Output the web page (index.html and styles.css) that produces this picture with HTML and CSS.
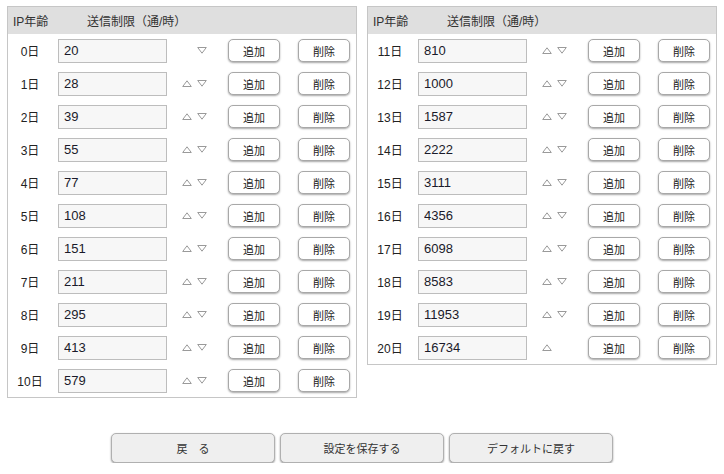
FILE: index.html
```html
<!DOCTYPE html>
<html lang="ja">
<head>
<meta charset="utf-8">
<link rel="stylesheet" href="styles.css">
</head>
<body>
<div class="panels">
  <div class="panel">
    <div class="head"><span class="h-age">IP年齢</span><span class="h-limit">送信制限（通/時）</span></div>
    <div class="row"><span class="day">0日</span><input class="val" value="20"><span class="arrows"><svg class="tri hide" viewBox="0 0 10 7"><path d="M5 0.8L9.3 6.5H0.7Z"/></svg><svg class="tri" viewBox="0 0 10 7"><path d="M0.7 0.5H9.3L5 6.2Z"/></svg></span><button class="btn add">追加</button><button class="btn del">削除</button></div>
    <div class="row"><span class="day">1日</span><input class="val" value="28"><span class="arrows"><svg class="tri" viewBox="0 0 10 7"><path d="M5 0.8L9.3 6.5H0.7Z"/></svg><svg class="tri" viewBox="0 0 10 7"><path d="M0.7 0.5H9.3L5 6.2Z"/></svg></span><button class="btn add">追加</button><button class="btn del">削除</button></div>
    <div class="row"><span class="day">2日</span><input class="val" value="39"><span class="arrows"><svg class="tri" viewBox="0 0 10 7"><path d="M5 0.8L9.3 6.5H0.7Z"/></svg><svg class="tri" viewBox="0 0 10 7"><path d="M0.7 0.5H9.3L5 6.2Z"/></svg></span><button class="btn add">追加</button><button class="btn del">削除</button></div>
    <div class="row"><span class="day">3日</span><input class="val" value="55"><span class="arrows"><svg class="tri" viewBox="0 0 10 7"><path d="M5 0.8L9.3 6.5H0.7Z"/></svg><svg class="tri" viewBox="0 0 10 7"><path d="M0.7 0.5H9.3L5 6.2Z"/></svg></span><button class="btn add">追加</button><button class="btn del">削除</button></div>
    <div class="row"><span class="day">4日</span><input class="val" value="77"><span class="arrows"><svg class="tri" viewBox="0 0 10 7"><path d="M5 0.8L9.3 6.5H0.7Z"/></svg><svg class="tri" viewBox="0 0 10 7"><path d="M0.7 0.5H9.3L5 6.2Z"/></svg></span><button class="btn add">追加</button><button class="btn del">削除</button></div>
    <div class="row"><span class="day">5日</span><input class="val" value="108"><span class="arrows"><svg class="tri" viewBox="0 0 10 7"><path d="M5 0.8L9.3 6.5H0.7Z"/></svg><svg class="tri" viewBox="0 0 10 7"><path d="M0.7 0.5H9.3L5 6.2Z"/></svg></span><button class="btn add">追加</button><button class="btn del">削除</button></div>
    <div class="row"><span class="day">6日</span><input class="val" value="151"><span class="arrows"><svg class="tri" viewBox="0 0 10 7"><path d="M5 0.8L9.3 6.5H0.7Z"/></svg><svg class="tri" viewBox="0 0 10 7"><path d="M0.7 0.5H9.3L5 6.2Z"/></svg></span><button class="btn add">追加</button><button class="btn del">削除</button></div>
    <div class="row"><span class="day">7日</span><input class="val" value="211"><span class="arrows"><svg class="tri" viewBox="0 0 10 7"><path d="M5 0.8L9.3 6.5H0.7Z"/></svg><svg class="tri" viewBox="0 0 10 7"><path d="M0.7 0.5H9.3L5 6.2Z"/></svg></span><button class="btn add">追加</button><button class="btn del">削除</button></div>
    <div class="row"><span class="day">8日</span><input class="val" value="295"><span class="arrows"><svg class="tri" viewBox="0 0 10 7"><path d="M5 0.8L9.3 6.5H0.7Z"/></svg><svg class="tri" viewBox="0 0 10 7"><path d="M0.7 0.5H9.3L5 6.2Z"/></svg></span><button class="btn add">追加</button><button class="btn del">削除</button></div>
    <div class="row"><span class="day">9日</span><input class="val" value="413"><span class="arrows"><svg class="tri" viewBox="0 0 10 7"><path d="M5 0.8L9.3 6.5H0.7Z"/></svg><svg class="tri" viewBox="0 0 10 7"><path d="M0.7 0.5H9.3L5 6.2Z"/></svg></span><button class="btn add">追加</button><button class="btn del">削除</button></div>
    <div class="row"><span class="day">10日</span><input class="val" value="579"><span class="arrows"><svg class="tri" viewBox="0 0 10 7"><path d="M5 0.8L9.3 6.5H0.7Z"/></svg><svg class="tri" viewBox="0 0 10 7"><path d="M0.7 0.5H9.3L5 6.2Z"/></svg></span><button class="btn add">追加</button><button class="btn del">削除</button></div>
  </div>
  <div class="panel">
    <div class="head"><span class="h-age">IP年齢</span><span class="h-limit">送信制限（通/時）</span></div>
    <div class="row"><span class="day">11日</span><input class="val" value="810"><span class="arrows"><svg class="tri" viewBox="0 0 10 7"><path d="M5 0.8L9.3 6.5H0.7Z"/></svg><svg class="tri" viewBox="0 0 10 7"><path d="M0.7 0.5H9.3L5 6.2Z"/></svg></span><button class="btn add">追加</button><button class="btn del">削除</button></div>
    <div class="row"><span class="day">12日</span><input class="val" value="1000"><span class="arrows"><svg class="tri" viewBox="0 0 10 7"><path d="M5 0.8L9.3 6.5H0.7Z"/></svg><svg class="tri" viewBox="0 0 10 7"><path d="M0.7 0.5H9.3L5 6.2Z"/></svg></span><button class="btn add">追加</button><button class="btn del">削除</button></div>
    <div class="row"><span class="day">13日</span><input class="val" value="1587"><span class="arrows"><svg class="tri" viewBox="0 0 10 7"><path d="M5 0.8L9.3 6.5H0.7Z"/></svg><svg class="tri" viewBox="0 0 10 7"><path d="M0.7 0.5H9.3L5 6.2Z"/></svg></span><button class="btn add">追加</button><button class="btn del">削除</button></div>
    <div class="row"><span class="day">14日</span><input class="val" value="2222"><span class="arrows"><svg class="tri" viewBox="0 0 10 7"><path d="M5 0.8L9.3 6.5H0.7Z"/></svg><svg class="tri" viewBox="0 0 10 7"><path d="M0.7 0.5H9.3L5 6.2Z"/></svg></span><button class="btn add">追加</button><button class="btn del">削除</button></div>
    <div class="row"><span class="day">15日</span><input class="val" value="3111"><span class="arrows"><svg class="tri" viewBox="0 0 10 7"><path d="M5 0.8L9.3 6.5H0.7Z"/></svg><svg class="tri" viewBox="0 0 10 7"><path d="M0.7 0.5H9.3L5 6.2Z"/></svg></span><button class="btn add">追加</button><button class="btn del">削除</button></div>
    <div class="row"><span class="day">16日</span><input class="val" value="4356"><span class="arrows"><svg class="tri" viewBox="0 0 10 7"><path d="M5 0.8L9.3 6.5H0.7Z"/></svg><svg class="tri" viewBox="0 0 10 7"><path d="M0.7 0.5H9.3L5 6.2Z"/></svg></span><button class="btn add">追加</button><button class="btn del">削除</button></div>
    <div class="row"><span class="day">17日</span><input class="val" value="6098"><span class="arrows"><svg class="tri" viewBox="0 0 10 7"><path d="M5 0.8L9.3 6.5H0.7Z"/></svg><svg class="tri" viewBox="0 0 10 7"><path d="M0.7 0.5H9.3L5 6.2Z"/></svg></span><button class="btn add">追加</button><button class="btn del">削除</button></div>
    <div class="row"><span class="day">18日</span><input class="val" value="8583"><span class="arrows"><svg class="tri" viewBox="0 0 10 7"><path d="M5 0.8L9.3 6.5H0.7Z"/></svg><svg class="tri" viewBox="0 0 10 7"><path d="M0.7 0.5H9.3L5 6.2Z"/></svg></span><button class="btn add">追加</button><button class="btn del">削除</button></div>
    <div class="row"><span class="day">19日</span><input class="val" value="11953"><span class="arrows"><svg class="tri" viewBox="0 0 10 7"><path d="M5 0.8L9.3 6.5H0.7Z"/></svg><svg class="tri" viewBox="0 0 10 7"><path d="M0.7 0.5H9.3L5 6.2Z"/></svg></span><button class="btn add">追加</button><button class="btn del">削除</button></div>
    <div class="row"><span class="day">20日</span><input class="val" value="16734"><span class="arrows"><svg class="tri" viewBox="0 0 10 7"><path d="M5 0.8L9.3 6.5H0.7Z"/></svg><svg class="tri hide" viewBox="0 0 10 7"><path d="M0.7 0.5H9.3L5 6.2Z"/></svg></span><button class="btn add">追加</button><button class="btn del">削除</button></div>
  </div>
</div>
<div class="actions">
  <button class="big">戻　る</button>
  <button class="big">設定を保存する</button>
  <button class="big">デフォルトに戻す</button>
</div>
</body>
</html>
```

FILE: styles.css
```css
html, body {
  margin: 0;
  padding: 0;
  background: #fff;
}
body {
  font-family: "Liberation Sans", "Noto Sans CJK JP", sans-serif;
  font-size: 12px;
  color: #333;
  padding: 6px 0 0 7px;
}
.panels {
  display: flex;
  align-items: flex-start;
  gap: 10px;
}
.panel {
  width: 348px;
  border: 1px solid #c6c6c6;
  background: #fff;
}
.head {
  height: 27px;
  background: #dfdfdf;
  display: flex;
  align-items: center;
  font-size: 12px;
  color: #333;
}
.h-age {
  margin-left: 5px;
  width: 74px;
}
.row {
  height: 33px;
  display: flex;
  align-items: center;
}
.day {
  width: 44px;
  text-align: center;
  font-size: 12px;
  color: #222;
}
.val {
  margin: 0 0 0 6px;
  box-sizing: border-box;
  width: 109px;
  height: 24px;
  border: 1px solid #bdbdbd;
  background: #f7f7f7;
  padding: 0 0 0 5px;
  font-family: "Liberation Sans", "Noto Sans CJK JP", sans-serif;
  font-size: 13px;
  color: #1a1a2a;
  outline: none;
}
.arrows {
  margin-left: 15px;
  display: flex;
  gap: 5px;
  align-items: center;
}
.tri {
  width: 10px;
  height: 7px;
  display: block;
}
.tri path {
  fill: none;
  stroke: #9a9a9a;
  stroke-width: 1;
}
.tri.hide {
  visibility: hidden;
}
.btn {
  box-sizing: border-box;
  width: 52px;
  height: 23px;
  border: 1px solid #a8a8a8;
  border-radius: 5px;
  background: #fff;
  box-shadow: 0 1px 2px rgba(0,0,0,0.35);
  font-family: "Noto Sans CJK JP", sans-serif;
  font-size: 11px;
  color: #222;
  padding: 0;
  margin: 0;
}
.add {
  margin-left: 21px;
}
.del {
  margin-left: 18px;
}
.actions {
  display: flex;
  justify-content: center;
  gap: 5px;
  margin-top: 35px;
  margin-left: -7px;
}
.big {
  box-sizing: border-box;
  width: 164px;
  height: 30px;
  border: 1px solid #b0b0b0;
  border-radius: 5px;
  background: #efefef;
  box-shadow: 0 1px 2px rgba(0,0,0,0.4);
  font-family: "Noto Sans CJK JP", sans-serif;
  font-size: 11px;
  color: #333;
  padding: 0;
}
```
